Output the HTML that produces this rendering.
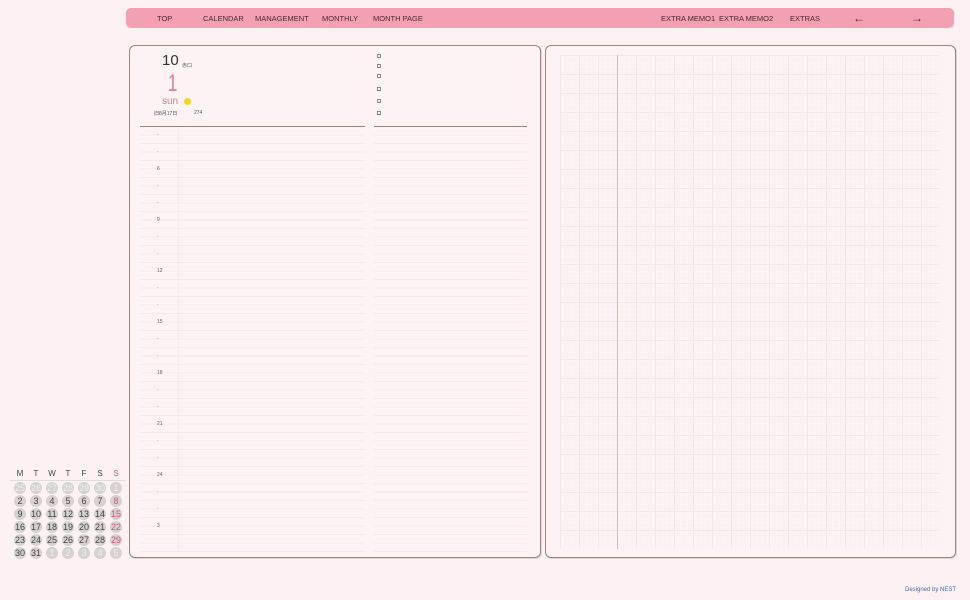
<!DOCTYPE html>
<html><head><meta charset="utf-8"><style>
*{margin:0;padding:0;box-sizing:border-box}
body{width:970px;height:600px;background:#fdf1f3;font-family:"Liberation Sans","Noto Sans CJK JP",sans-serif;position:relative;overflow:hidden;color:#333}
.nav{position:absolute;left:126px;top:8px;width:828px;height:20px;background:#f2a0b2;border-radius:5px}
.nav span{position:absolute;top:6px;font-size:7.5px;color:#4a2a30;white-space:nowrap}
.page{position:absolute;border:1px solid #9a8580;border-radius:6px;background:#fdf3f4;box-shadow:1px 1px 0 #e0d4d4}
.lines{position:absolute;background:repeating-linear-gradient(to bottom,transparent 0,transparent 7.5px,#f5e9eb 7.5px,#f5e9eb 8.5px)}
.t{position:absolute;font-size:5px;color:#666;left:157px}
.cb{position:absolute;left:377px;width:4px;height:4px;border:0.6px solid #888}
.cal{position:absolute;left:10px;top:469px;width:115px}
.cal div{position:absolute;width:12px;height:12px;border-radius:50%;background:#d6d2d2;font-size:9px;text-align:center;line-height:12px;color:#444}
.cal div.o{color:#eee}
.cal div.s{color:#d4587a}
.cal b{position:absolute;font-weight:normal;font-size:8px;color:#444;width:12px;text-align:center}
</style></head><body>
<div class="nav">
<span style="left:31px">TOP</span><span style="left:77px">CALENDAR</span><span style="left:129px">MANAGEMENT</span><span style="left:196px">MONTHLY</span><span style="left:247px">MONTH PAGE</span>
<span style="left:535px">EXTRA MEMO1</span><span style="left:593px">EXTRA MEMO2</span><span style="left:664px">EXTRAS</span>
<span style="left:727px;top:3px;font-size:12px">←</span><span style="left:785px;top:3px;font-size:12px">→</span>
</div>
<div class="page" style="left:129px;top:45px;width:412px;height:513px"></div>
<div class="page" style="left:545px;top:45px;width:411px;height:513px"></div>
<div style="position:absolute;left:162px;top:52px;font-size:15px;color:#333">10</div>
<div style="position:absolute;left:182px;top:62px;font-size:5px;color:#555">赤口</div>
<div style="position:absolute;left:166px;top:70px;font-size:24px;color:#d87a98;transform:scaleX(0.7)">1</div>
<div style="position:absolute;left:162px;top:96px;font-size:10px;color:#d87a98">sun</div>
<div style="position:absolute;left:184px;top:98px;width:7px;height:7px;border-radius:50%;background:#f0d820"></div>
<div style="position:absolute;left:154px;top:110px;font-size:5px;color:#555">旧8月17日</div>
<div style="position:absolute;left:194px;top:110px;font-size:5px;color:#555">274</div>
<div class="cb" style="top:54px"></div><div class="cb" style="top:64px"></div><div class="cb" style="top:74px"></div><div class="cb" style="top:87px"></div><div class="cb" style="top:99px"></div><div class="cb" style="top:111px"></div>
<div style="position:absolute;left:140px;top:126px;width:225px;height:1px;background:#9a8580"></div>
<div style="position:absolute;left:374px;top:126px;width:153px;height:1px;background:#9a8580"></div>
<div class="lines" style="left:140px;top:127px;width:225px;height:425px"></div>
<div class="lines" style="left:374px;top:127px;width:153px;height:425px"></div>
<div style="position:absolute;left:178px;top:127px;width:1px;height:425px;background:#f7eced"></div>
<div class="t" style="top:132px">·</div><div class="t" style="top:149px">·</div><div class="t" style="top:166px">6</div><div class="t" style="top:183px">·</div><div class="t" style="top:200px">·</div><div class="t" style="top:217px">9</div><div class="t" style="top:234px">·</div><div class="t" style="top:251px">·</div><div class="t" style="top:268px">12</div><div class="t" style="top:285px">·</div><div class="t" style="top:302px">·</div><div class="t" style="top:319px">15</div><div class="t" style="top:336px">·</div><div class="t" style="top:353px">·</div><div class="t" style="top:370px">18</div><div class="t" style="top:387px">·</div><div class="t" style="top:404px">·</div><div class="t" style="top:421px">21</div><div class="t" style="top:438px">·</div><div class="t" style="top:455px">·</div><div class="t" style="top:472px">24</div><div class="t" style="top:489px">·</div><div class="t" style="top:506px">·</div><div class="t" style="top:523px">3</div>
<div style="position:absolute;left:560px;top:55px;width:380px;height:494px;background-image:linear-gradient(to right,#f5e7e9 1px,transparent 1px),linear-gradient(to bottom,#f5e7e9 1px,transparent 1px),linear-gradient(to right,#faf0f1 1px,transparent 1px),linear-gradient(to bottom,#faf0f1 1px,transparent 1px);background-size:19px 19px,19px 19px,4.75px 4.75px,4.75px 4.75px"></div>
<div style="position:absolute;left:617px;top:55px;width:1px;height:494px;background:#cbbcbc"></div>
<div class="cal">
<b style="left:4px;top:0">M</b><b style="left:20px;top:0">T</b><b style="left:36px;top:0">W</b><b style="left:52px;top:0">T</b><b style="left:68px;top:0">F</b><b style="left:84px;top:0">S</b><b style="left:100px;top:0;color:#d4587a">S</b>
<div style="position:absolute;left:0;top:11px;width:115px;height:1px;background:#ddd;border-radius:0"></div>
<div class="o" style="left:4px;top:13px">25</div><div class="o" style="left:20px;top:13px">26</div><div class="o" style="left:36px;top:13px">27</div><div class="o" style="left:52px;top:13px">28</div><div class="o" style="left:68px;top:13px">29</div><div class="o" style="left:84px;top:13px">30</div><div class="o" style="left:100px;top:13px">1</div>
<div style="left:4px;top:26px">2</div><div style="left:20px;top:26px">3</div><div style="left:36px;top:26px">4</div><div style="left:52px;top:26px">5</div><div style="left:68px;top:26px">6</div><div style="left:84px;top:26px">7</div><div class="s" style="left:100px;top:26px">8</div>
<div style="left:4px;top:39px">9</div><div style="left:20px;top:39px">10</div><div style="left:36px;top:39px">11</div><div style="left:52px;top:39px">12</div><div style="left:68px;top:39px">13</div><div style="left:84px;top:39px">14</div><div class="s" style="left:100px;top:39px">15</div>
<div style="left:4px;top:52px">16</div><div style="left:20px;top:52px">17</div><div style="left:36px;top:52px">18</div><div style="left:52px;top:52px">19</div><div style="left:68px;top:52px">20</div><div style="left:84px;top:52px">21</div><div class="s" style="left:100px;top:52px">22</div>
<div style="left:4px;top:65px">23</div><div style="left:20px;top:65px">24</div><div style="left:36px;top:65px">25</div><div style="left:52px;top:65px">26</div><div style="left:68px;top:65px">27</div><div style="left:84px;top:65px">28</div><div class="s" style="left:100px;top:65px">29</div>
<div style="left:4px;top:78px">30</div><div style="left:20px;top:78px">31</div><div class="o" style="left:36px;top:78px">1</div><div class="o" style="left:52px;top:78px">2</div><div class="o" style="left:68px;top:78px">3</div><div class="o" style="left:84px;top:78px">4</div><div class="o" style="left:100px;top:78px">5</div>
</div>
<div style="position:absolute;left:905px;top:587px;font-size:6px;color:#4a6ab0">Designed by NEST</div>
</body></html>
